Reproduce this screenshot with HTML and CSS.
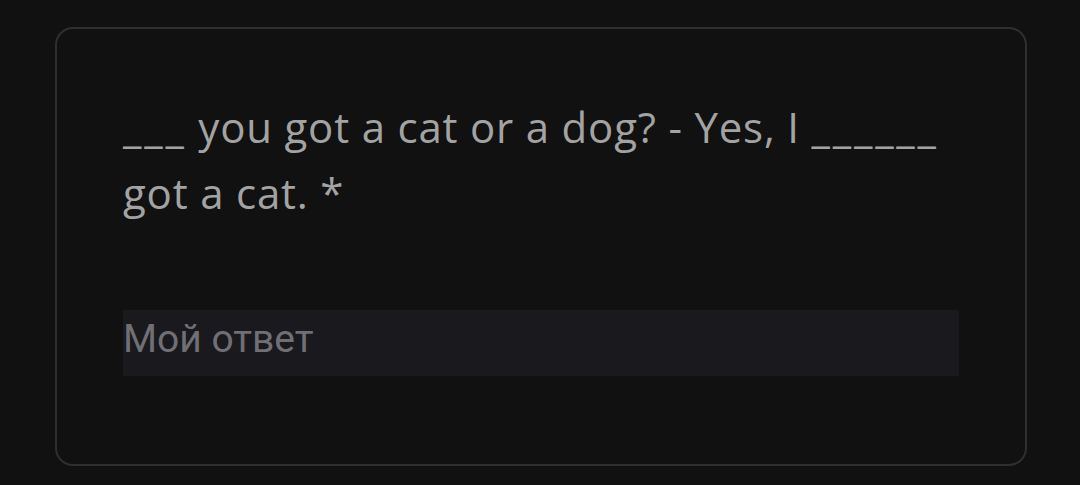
FILE: index.html
```html
<!DOCTYPE html>
<html lang="ru">
<head>
<meta charset="utf-8">
<link rel="stylesheet" href="styles.css">
</head>
<body>
<div class="page">
  <div class="card">
    <div class="question"><span class="blank">___</span> you got a cat or a dog? - Yes, I <span class="blank">______</span> got a cat. *</div>
    <div class="answer"><span class="placeholder">Мой ответ</span></div>
  </div>
</div>
</body>
</html>
```

FILE: styles.css
```css
html, body {
  margin: 0;
  padding: 0;
  background: #111111;
  width: 1080px;
  height: 485px;
  overflow: hidden;
}
.page {
  padding: 27px 0 0 55px;
}
.card {
  box-sizing: border-box;
  width: 972px;
  height: 439px;
  border: 2px solid #2f2f2f;
  border-radius: 18px;
  background: #111111;
  padding: 65px 66px 0 66px;
}
.question {
  font-family: "Open Sans", "Noto Sans", sans-serif;
  font-size: 42px;
  line-height: 66px;
  color: #a3a3a3;
  letter-spacing: 0.8px;
  width: 836px;
}
.blank {
  letter-spacing: 2.8px;
}
.answer {
  margin-top: 84px;
  box-sizing: border-box;
  width: 836px;
  height: 66px;
  background: #1a191e;
  padding-top: 6px;
}
.placeholder {
  font-family: Roboto, "Noto Sans", sans-serif;
  font-size: 39px;
  line-height: normal;
  color: #706f76;
}
```
